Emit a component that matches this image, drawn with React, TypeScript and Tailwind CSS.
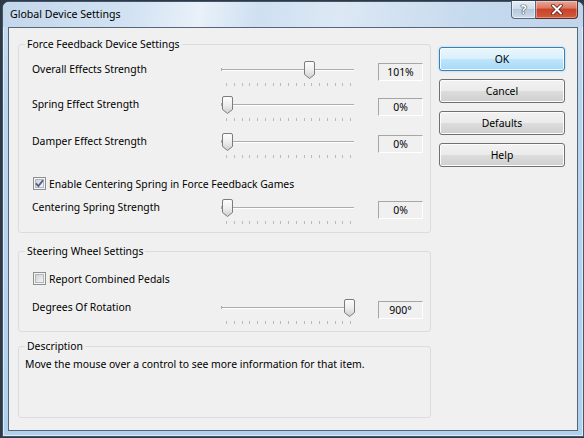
import React from "react";

const TRACK_RANGE = 122;

function Thumb({ left }: { left: number }) {
  return (
    <svg
      width="11"
      height="18"
      viewBox="0 0 11 18"
      className="absolute top-0"
      style={{ left }}
    >
      <defs>
        <linearGradient id="thumbFill" x1="0" y1="0" x2="0" y2="1">
          <stop offset="0" stopColor="#fdfdfd" />
          <stop offset="0.5" stopColor="#eeeeee" />
          <stop offset="1" stopColor="#cdcdcd" />
        </linearGradient>
      </defs>
      <path
        d="M2 0.5H9A1.5 1.5 0 0 1 10.5 2V13.5L5.5 17.5L0.5 13.5V2A1.5 1.5 0 0 1 2 0.5Z"
        fill="url(#thumbFill)"
        stroke="#7c7c7c"
      />
    </svg>
  );
}

function Checkbox({ checked }: { checked?: boolean }) {
  return (
    <svg width="13" height="13" viewBox="0 0 13 13" className="shrink-0">
      <defs>
        <linearGradient id="cbFill" x1="0" y1="0" x2="1" y2="1">
          <stop offset="0" stopColor="#cbcfd5" />
          <stop offset="1" stopColor="#f7f7f7" />
        </linearGradient>
      </defs>
      <rect x="0.5" y="0.5" width="12" height="12" fill="#f4f4f4" stroke="#8e8f8f" />
      <rect x="2.5" y="2.5" width="8" height="8" fill="url(#cbFill)" stroke="#b3b8be" />
      {checked && (
        <path
          d="M3 6.3L5.4 9L10 3.2"
          fill="none"
          stroke="#4a5f8f"
          strokeWidth="1.8"
        />
      )}
    </svg>
  );
}

function SliderRow({
  label,
  value,
  max,
  text,
  className,
}: {
  label: string;
  value: number;
  max: number;
  text: string;
  className: string;
}) {
  const left = 1 + Math.round((value / max) * TRACK_RANGE);
  return (
    <div className={`flex h-[25px] ${className}`}>
      <div className="w-[196px] pl-[7px] leading-[16px]">{label}</div>
      <div className="relative w-[133px] h-[25px] shrink-0">
        <div className="absolute left-0 right-0 top-[8px] h-[2px] border-t border-[#acacac] bg-white" />
        <div className="absolute left-0 top-[7px] w-px h-[3px] bg-[#acacac]" />
        <div className="absolute left-[5px] top-[22px] w-[125px] flex justify-between">
          {Array.from({ length: 17 }).map((_, i) => (
            <span key={i} className="w-px h-[3px] bg-[#bababa]" />
          ))}
        </div>
        <Thumb left={left} />
      </div>
      <div className="ml-[24px] mt-[2px] w-[45px] h-[18px] border border-t-[#a6a6a6] border-l-[#a6a6a6] border-b-white border-r-white flex items-center justify-center leading-none">
        {text}
      </div>
    </div>
  );
}

function DialogButton({ label, primary }: { label: string; primary?: boolean }) {
  return (
    <button
      className={
        primary
          ? "h-[24px] w-full rounded-[3px] border border-[#3c7fb1] bg-[linear-gradient(#eaf6fd,#d9f0fc_50%,#bee6fd_50%,#a7d9f5)] shadow-[inset_0_0_0_1px_#f4fbff,0_0_2px_#7fc8f0] text-black leading-none"
          : "h-[24px] w-full rounded-[3px] border border-[#707070] bg-[linear-gradient(#f2f2f2,#ebebeb_50%,#dddddd_50%,#cfcfcf)] shadow-[inset_0_0_0_1px_#fcfcfc] text-black leading-none"
      }
    >
      {label}
    </button>
  );
}

export default function App() {
  return (
    <div className="w-[584px] h-[438px] overflow-hidden bg-[#2e3a48] font-['Noto_Sans',sans-serif] text-[10.4px] text-black">
      <div className="ml-[2px] mt-[1px] w-[582px] h-[436px] border border-[#44556a] rounded-t-[7px] bg-[linear-gradient(180deg,#cadcef_0%,#bad5ee_20%,#b0d0ee_100%)] shadow-[inset_0_0_0_1px_rgba(255,255,255,0.55)] flex flex-col">
        {/* title bar */}
        <div className="h-[25px] flex items-center pl-[7px] rounded-t-[6px] bg-[linear-gradient(100deg,#c3d7ec_0%,#d2e2f2_22%,#e9f1f9_34%,#cfe0f1_44%,#dce8f4_58%,#c6daee_80%,#bfd5ec_100%)]">
          <span className="text-[10.6px] leading-none">Global Device Settings</span>
          <div className="ml-auto mr-[5px] -mt-[1px] self-start flex">
            <div className="w-[25px] h-[18px] rounded-bl-[4px] border border-t-0 border-[#5a687a] bg-[linear-gradient(#e6edf5,#cfdbe8_45%,#b7c8db_50%,#cddbea)] shadow-[inset_0_0_0_1px_rgba(255,255,255,0.5)] flex items-center justify-center">
              <span className="text-[12px] font-bold leading-none text-white [text-shadow:0_0_1px_#2c3a4e,0_0_1px_#2c3a4e,0_0_1px_#2c3a4e]">
                ?
              </span>
            </div>
            <div className="w-[42px] h-[18px] rounded-br-[4px] border border-t-0 border-l-0 border-[#5c2b22] bg-[linear-gradient(#eaa797,#dc7a63_40%,#c9432a_50%,#d35a3e)] shadow-[inset_0_0_0_1px_rgba(255,255,255,0.35)] flex items-center justify-center">
              <svg width="12" height="11" viewBox="0 0 12 11">
                <path d="M2 1.5L10 9.5M10 1.5L2 9.5" stroke="#5a1e14" strokeWidth="3.6" strokeLinecap="round" />
                <path d="M2 1.5L10 9.5M10 1.5L2 9.5" stroke="#ffffff" strokeWidth="2" strokeLinecap="round" />
              </svg>
            </div>
          </div>
        </div>

        {/* client area */}
        <div className="ml-[5px] w-[570px] h-[404px] border border-[#56677a] bg-[#f0f0f0] flex">
          <div className="ml-[9px] w-[413px] flex flex-col">
            <fieldset className="mt-[9px] border border-[#d9dde1] rounded-[3px] px-[6px] pb-[8px]">
              <legend className="px-[2px] leading-[15px]">Force Feedback Device Settings</legend>
              <SliderRow className="mt-[9px]" label="Overall Effects Strength" value={101} max={150} text="101%" />
              <SliderRow className="mt-[10px]" label="Spring Effect Strength" value={0} max={150} text="0%" />
              <SliderRow className="mt-[12px]" label="Damper Effect Strength" value={0} max={150} text="0%" />
              <div className="mt-[19px] h-[13px] pl-[8px] flex items-center">
                <Checkbox checked />
                <span className="ml-[3px] leading-[16px]">Enable Centering Spring in Force Feedback Games</span>
              </div>
              <SliderRow className="mt-[9px]" label="Centering Spring Strength" value={0} max={150} text="0%" />
            </fieldset>

            <fieldset className="mt-[11px] border border-[#d9dde1] rounded-[3px] px-[6px] pb-[7px]">
              <legend className="px-[2px] leading-[15px]">Steering Wheel Settings</legend>
              <div className="mt-[13px] h-[13px] pl-[8px] flex items-center">
                <Checkbox />
                <span className="ml-[3px] leading-[16px]">Report Combined Pedals</span>
              </div>
              <SliderRow className="mt-[14px]" label="Degrees Of Rotation" value={900} max={900} text="900°" />
            </fieldset>

            <fieldset className="mt-[7px] border border-[#d9dde1] rounded-[3px] px-[6px]">
              <legend className="px-[2px] leading-[15px]">Description</legend>
              <div className="h-[63px] pt-[2px] leading-[16px]">
                Move the mouse over a control to see more information for that item.
              </div>
            </fieldset>
          </div>

          <div className="ml-[8px] mt-[19px] w-[126px] flex flex-col gap-[8px]">
            <DialogButton label="OK" primary />
            <DialogButton label="Cancel" />
            <DialogButton label="Defaults" />
            <DialogButton label="Help" />
          </div>
        </div>
      </div>
    </div>
  );
}
